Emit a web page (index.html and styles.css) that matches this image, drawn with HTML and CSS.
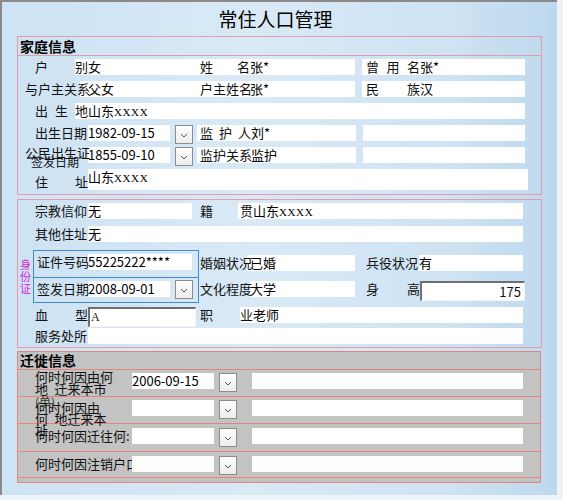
FILE: index.html
```html
<!DOCTYPE html>
<html lang="zh-CN">
<head>
<meta charset="utf-8">
<title>常住人口管理</title>
<link rel="stylesheet" href="styles.css">
</head>
<body>
<div class="window">
  <h1 class="title">常住人口管理</h1>

  <section class="sec sec1">
    <div class="sec-head">家庭信息</div>
    <div class="sec-body">
      <div class="row">
        <div class="f m17"><span class="lb w53 j">户 别</span><span class="in e13 w118">女</span></div>
        <div class="f m7"><span class="lb w50 j">姓 名</span><span class="in e57 w162">张*</span></div>
        <div class="f m11"><span class="lb w54 j">曾 用 名</span><span class="in e58 w163">张*</span></div>
      </div>
      <div class="row">
        <div class="f m7"><span class="lb w63">与户主关系</span><span class="in e8 w113">父女</span></div>
        <div class="f m7"><span class="lb w50">户主姓名</span><span class="in e57 w162">张*</span></div>
        <div class="f m11"><span class="lb w54 j">民 族</span><span class="in e58 w163">汉</span></div>
      </div>
      <div class="row">
        <div class="f m17"><span class="lb w53 j">出 生 地</span><span class="in e13 w450">山东<span class="xx">XXXX</span></span></div>
      </div>
      <div class="row">
        <div class="f m17"><span class="lb w53">出生日期</span><span class="in w82">1982-09-15</span><span class="btn"><svg viewBox="0 0 16 17" width="16" height="17"><path d="M5 8l3 3 3-3" fill="none" stroke="#555" stroke-width="1"/></svg></span></div>
        <div class="f m7"><span class="lb w51 j">监 护 人</span><span class="in e54 w159">刘*</span></div>
        <div class="f m7"><span class="in w162"></span></div>
      </div>
      <div class="row">
        <div class="f m7"><span class="lb lb2 w63"><span class="l1">公民出生证</span><span class="l2">签发日期</span></span><span class="in w82">1855-09-10</span><span class="btn"><svg viewBox="0 0 16 17" width="16" height="17"><path d="M5 8l3 3 3-3" fill="none" stroke="#555" stroke-width="1"/></svg></span></div>
        <div class="f m7"><span class="lb w51">监护关系</span><span class="in e54 w159">监护</span></div>
        <div class="f m7"><span class="in w162"></span></div>
      </div>
      <div class="row row-addr">
        <div class="f m17"><span class="lb w53 j lb-bottom">住 址</span><span class="in w440 area">山东<span class="xx">XXXX</span></span></div>
      </div>
    </div>
  </section>

  <section class="sec sec2">
    <div class="sec-body">
      <div class="row">
        <div class="f m17"><span class="lb w53">宗教信仰</span><span class="in w104">无</span></div>
        <div class="f m8"><span class="lb w53 j">籍 贯</span><span class="in e15 w285">山东<span class="xx">XXXX</span></span></div>
      </div>
      <div class="row">
        <div class="f m17"><span class="lb w53">其他住址</span><span class="in w435">无</span></div>
      </div>
      <div class="idrow">
        <div class="sfz">身份证</div>
        <div class="idbox">
          <div class="idsub idsub1">
            <span class="lb w51 ml3">证件号码</span><span class="in w104">55225222****</span>
          </div>
          <div class="idsub idsub2">
            <span class="lb w51 ml3">签发日期</span><span class="in w82">2008-09-01</span><span class="btn"><svg viewBox="0 0 16 17" width="16" height="17"><path d="M5 8l3 3 3-3" fill="none" stroke="#555" stroke-width="1"/></svg></span>
          </div>
        </div>
        <div class="rcol">
          <div class="rrow">
            <div class="f"><span class="lb w50">婚姻状况</span><span class="in e3 w108">已婚</span></div>
            <div class="f m11"><span class="lb w53">兵役状况</span><span class="in w104">有</span></div>
          </div>
          <div class="rrow rrow2">
            <div class="f"><span class="lb w50">文化程度</span><span class="in w105">大学</span></div>
            <div class="f m11"><span class="lb w54 j">身 高</span><span class="sunk w105 num">175</span></div>
          </div>
        </div>
      </div>
      <div class="row row-blood">
        <div class="f m17"><span class="lb w53 j">血 型</span><span class="sunk w108 blood">A</span></div>
        <div class="f m4"><span class="lb w53 j">职 业</span><span class="in e13 w283">老师</span></div>
      </div>
      <div class="row row-last">
        <div class="f m17"><span class="lb w53">服务处所</span><span class="in w435"></span></div>
      </div>
    </div>
  </section>

  <section class="sec sec3">
    <div class="sec-head">迁徙信息</div>
    <div class="mrow mr1">
      <div class="mlb ml-two"><span>何时何因由何</span><span>地&ensp;迁来本市</span></div>
      <span class="in w82">2006-09-15</span><span class="btn"><svg viewBox="0 0 16 17" width="16" height="17"><path d="M5 8l3 3 3-3" fill="none" stroke="#555" stroke-width="1"/></svg></span><span class="in w271 m15"></span>
    </div>
    <div class="mrow mr2">
      <div class="mlb ml-four"><span class="ghost">(单)</span><span>何时何因由</span><span>何&ensp;地迁来本</span><span>址</span></div>
      <span class="in w82"></span><span class="btn"><svg viewBox="0 0 16 17" width="16" height="17"><path d="M5 8l3 3 3-3" fill="none" stroke="#555" stroke-width="1"/></svg></span><span class="in w271 m15"></span>
    </div>
    <div class="mrow mr3">
      <div class="mlb ml-one">何时何因迁往何:</div>
      <span class="in w82"></span><span class="btn"><svg viewBox="0 0 16 17" width="16" height="17"><path d="M5 8l3 3 3-3" fill="none" stroke="#555" stroke-width="1"/></svg></span><span class="in w271 m15"></span>
    </div>
    <div class="mrow mr4">
      <div class="mlb ml-one">何时何因注销户口</div>
      <span class="in w82"></span><span class="btn"><svg viewBox="0 0 16 17" width="16" height="17"><path d="M5 8l3 3 3-3" fill="none" stroke="#555" stroke-width="1"/></svg></span><span class="in w271 m15"></span>
    </div>
  </section>
</div>
</body>
</html>
```

FILE: styles.css
```css
* { box-sizing: border-box; }
html, body { margin: 0; padding: 0; }
body {
  background: #eef3f8;
  font-family: "Noto Sans CJK SC", "Noto Sans", sans-serif;
  font-size: 13px;
  color: #111;
}
.window {
  width: 557px;
  height: 495px;
  border-top: 2px solid #8a8a8a;
  border-left: 2px solid #8a8a8a;
  background: linear-gradient(90deg, #cde2f3 0%, #d9e9f6 45%, #cfe3f3 80%, #bdd8ee 100%);
  overflow: hidden;
}
.title {
  margin: 0;
  height: 34px;
  line-height: 34px;
  font-size: 19px;
  font-weight: normal;
  text-align: center;
  padding-right: 8px;
  color: #000;
}
.sec {
  margin-left: 15px;
  width: 525px;
  border: 1px solid #e39cac;
}
.sec2 { margin-top: 4px; }
.sec-head {
  height: 19px;
  padding: 2px 0 0 2px;
  line-height: 14px;
  font-size: 14px;
  font-weight: bold;
  color: #000;
  border-bottom: 1px solid #e39cac;
}
.sec1 .sec-body { padding: 3px 0 4px; }
.sec2 .sec-body { padding: 3px 0 3px; }

.row { display: flex; align-items: center; height: 16px; margin-bottom: 6px; }
.sec2 .row { margin-bottom: 7px; }
.sec2 .row + .row { margin-bottom: 8px; }
.row-addr { height: 21px; margin-bottom: 0; align-items: stretch; }
.row-blood { height: 20px; align-items: flex-start; margin-top: 4px; }
.sec2 .row.row-blood { margin-bottom: 1px; }
.sec2 .row.row-last { margin-bottom: 0; }

.f { display: flex; align-items: center; height: 100%; flex: none; }
.row-blood .f { align-items: flex-start; }
.row-addr .f { align-items: stretch; }

.lb {
  flex: none;
  z-index: 1;
  white-space: nowrap;
  line-height: 16px;
  color: #111;
}
.j { text-align: justify; text-align-last: justify; }
.lb-bottom { align-self: flex-end; }
.lb2 { display: flex; flex-direction: column; align-self: flex-start; margin-top: 0; }
.lb2 .l1 { font-size: 13px; line-height: 11px; }
.lb2 .l2 { font-size: 12px; line-height: 8px; padding-left: 6px; }

.in {
  flex: none;
  display: block;
  height: 16px;
  line-height: 16px;
  background: #fff;
  white-space: nowrap;
  color: #000;
}
.area { height: 21px; line-height: 14px; padding-top: 1px; }
.xx { font-family: "Liberation Serif", serif; font-size: 11px; letter-spacing: 0.6px; }

.sunk {
  flex: none;
  display: block;
  height: 20px;
  background: #fff;
  border-top: 2px solid #6f6f6f;
  border-left: 2px solid #6f6f6f;
  border-right: 1px solid #f4f4f4;
  border-bottom: 1px solid #f4f4f4;
  line-height: 17px;
  white-space: nowrap;
}
.num { text-align: right; padding-right: 3px; font-size: 13px; }
.blood { font-family: "Liberation Serif", serif; font-size: 12px; padding-left: 1px; }

.btn {
  flex: none;
  display: block;
  width: 18px;
  height: 19px;
  margin-left: 5px;
  border: 1px solid #8c8c8c;
  background: linear-gradient(#fefefe, #ededed);
}
.btn svg { display: block; }
.row .btn { align-self: flex-start; }

/* field offsets */
.m4 { margin-left: 4px; }
.m7 { margin-left: 7px; }
.m8 { margin-left: 8px; }
.m11 { margin-left: 11px; }
.m15 { margin-left: 15px; }
.m17 { margin-left: 17px; }
.ml3 { margin-left: 3px; }

/* label widths */
.w50 { width: 50px; }
.w51 { width: 51px; }
.w53 { width: 53px; }
.w54 { width: 54px; }
.w63 { width: 63px; }

/* input widths */
.w82 { width: 82px; }
.w103 { width: 103px; }
.w104 { width: 104px; }
.w105 { width: 105px; }
.w108 { width: 108px; }
.w113 { width: 113px; }
.w118 { width: 118px; }
.w159 { width: 159px; }
.w162 { width: 162px; }
.w163 { width: 163px; }
.w271 { width: 271px; }
.w283 { width: 283px; }
.w285 { width: 285px; }
.w435 { width: 435px; }
.w440 { width: 440px; }
.w450 { width: 450px; }

/* white box extending beneath the label */
.e3 { margin-left: -3px; padding-left: 3px; }
.e8 { margin-left: -8px; padding-left: 8px; }
.e13 { margin-left: -13px; padding-left: 13px; }
.e15 { margin-left: -15px; padding-left: 15px; }
.e54 { margin-left: -54px; padding-left: 54px; }
.e57 { margin-left: -57px; padding-left: 57px; }
.e58 { margin-left: -58px; padding-left: 58px; }

/* ID card block */
.idrow { display: flex; align-items: flex-start; height: 53px; }
.sfz {
  flex: none;
  width: 11px;
  margin-left: 2px;
  margin-top: 8px;
  font-size: 11px;
  line-height: 12px;
  color: #d51fd5;
}
.idbox {
  flex: none;
  width: 166px;
  height: 53px;
  margin-left: 2px;
  border: 1px solid #3f8bd2;
}
.idsub { display: flex; align-items: flex-start; padding-top: 3px; }
.idsub1 { height: 27px; border-bottom: 1px solid #3f8bd2; }
.idsub2 { height: 24px; }
.idsub2 .btn { margin-top: -1px; }
.rcol { flex: none; margin-left: 1px; padding-top: 5px; display: flex; flex-direction: column; }
.rrow { display: flex; align-items: flex-start; height: 16px; }
.rrow .f { align-items: flex-start; }
.rrow2 { margin-top: 10px; }

/* migration section */
.sec3 {
  margin-top: 3px;
  width: 524px;
  border-color: #e4867a;
  background: #c3c3c3;
  padding-bottom: 4px;
}
.sec3 .sec-head { height: 18px; padding-top: 1px; border-bottom-color: #e4867a; }
.mrow {
  display: flex;
  align-items: flex-start;
  border-bottom: 1px solid #e4867a;
}
.mr1 { height: 27px; padding-top: 3px; }
.mr2 { height: 27px; padding-top: 3px; }
.mr3 { height: 28px; padding-top: 4px; }
.mr4 { height: 26px; padding-top: 4px; }
.mlb {
  flex: none;
  width: 97px;
  margin-left: 17px;
  white-space: nowrap;
  color: #111;
}
.ml-two { display: flex; flex-direction: column; line-height: 12px; margin-top: -2px; }
.ml-four { display: flex; flex-direction: column; line-height: 11px; margin-top: -4px; }
.ml-four .ghost { margin-bottom: -5px; font-size: 12px; color: #333; }
.ml-one { line-height: 16px; }
.mrow .btn { margin-left: 5px; }
```
